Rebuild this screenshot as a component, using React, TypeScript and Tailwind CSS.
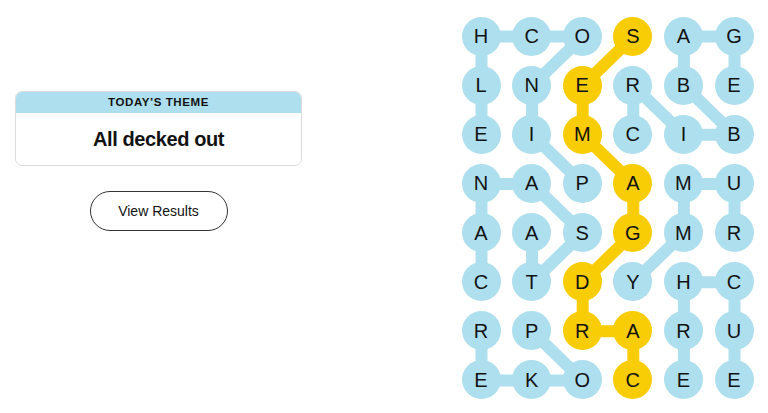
import React from "react"

const ROWS = [
  "HCOSAG",
  "LNERBE",
  "EIMCIB",
  "NAPAMU",
  "AASGMR",
  "CTDYHC",
  "RPRARU",
  "EKOCEE",
]

// cells in the spangram (row, col)
const GOLD = new Set(["0-3", "1-2", "2-2", "3-3", "4-3", "5-2", "6-2", "6-3", "7-3"])

const BLUE_LINKS: [number, number, number, number][] = [
  [0, 0, 0, 1], [0, 1, 0, 2], [0, 0, 1, 0], [1, 0, 2, 0], [0, 2, 1, 1], [1, 1, 2, 1], [2, 1, 3, 2],
  [0, 4, 0, 5], [0, 4, 1, 4], [0, 5, 1, 5], [1, 4, 2, 5], [2, 4, 2, 5], [1, 3, 2, 3], [1, 3, 2, 4],
  [3, 0, 3, 1], [3, 0, 4, 0], [4, 0, 5, 0], [3, 1, 4, 2], [4, 1, 5, 1], [4, 2, 5, 1],
  [3, 4, 3, 5], [3, 4, 4, 4], [3, 5, 4, 5], [4, 4, 5, 3],
  [5, 4, 5, 5], [5, 4, 6, 4], [6, 4, 7, 4], [5, 5, 6, 5], [6, 5, 7, 5],
  [6, 0, 7, 0], [7, 0, 7, 1], [7, 1, 7, 2], [6, 1, 7, 2],
]

const GOLD_LINKS: [number, number, number, number][] = [
  [0, 3, 1, 2], [1, 2, 2, 2], [2, 2, 3, 3], [3, 3, 4, 3], [4, 3, 5, 2], [5, 2, 6, 2], [6, 2, 6, 3], [6, 3, 7, 3],
]

const D = 39
const PX = 50.6
const PY = 49.14

const cx = (c: number) => D / 2 + c * PX
const cy = (r: number) => D / 2 + r * PY

function Links() {
  return (
    <svg className="absolute inset-0" width={D + 5 * PX} height={D + 7 * PY}>
      {BLUE_LINKS.map(([r1, c1, r2, c2], i) => (
        <line key={"b" + i} x1={cx(c1)} y1={cy(r1)} x2={cx(c2)} y2={cy(r2)} stroke="#aedfee" strokeWidth={12} />
      ))}
      {GOLD_LINKS.map(([r1, c1, r2, c2], i) => (
        <line key={"g" + i} x1={cx(c1)} y1={cy(r1)} x2={cx(c2)} y2={cy(r2)} stroke="#f8cd05" strokeWidth={12} />
      ))}
    </svg>
  )
}

function Board() {
  return (
    <div className="relative">
      <Links />
      <div className="relative grid grid-cols-[repeat(6,39px)] gap-x-[11.6px] gap-y-[10.14px]">
        {ROWS.flatMap((row, r) =>
          row.split("").map((ch, c) => (
            <div
              key={`${r}-${c}`}
              className={
                "flex size-[39px] items-center justify-center rounded-full text-[20px] text-[#121212] " +
                (GOLD.has(`${r}-${c}`) ? "bg-[#f8cd05]" : "bg-[#aedfee]")
              }
            >
              {ch}
            </div>
          ))
        )}
      </div>
    </div>
  )
}

export default function App() {
  return (
    <div className="flex h-[413px] w-[768px] justify-between bg-white pr-[14.5px] pt-[16.5px] font-['Liberation_Sans',Arial,sans-serif] text-[#121212]">
      <div className="flex w-[317px] flex-col items-center px-[15px] pt-[74.5px]">
        <div className="w-full overflow-hidden rounded-[7px] border border-[#dcdcdc]">
          <div className="flex h-[21px] items-center justify-center bg-[#aedfee] text-[11.5px] font-bold tracking-[0.05em]">
            TODAY’S THEME
          </div>
          <div className="flex h-[52px] items-center justify-center text-[20px] font-bold tracking-[-0.02em]">
            All decked out
          </div>
        </div>
        <button className="mt-[25px] flex h-[40px] w-[138px] items-center justify-center rounded-full border border-[#333] text-[14px]">
          View Results
        </button>
      </div>
      <Board />
    </div>
  )
}
